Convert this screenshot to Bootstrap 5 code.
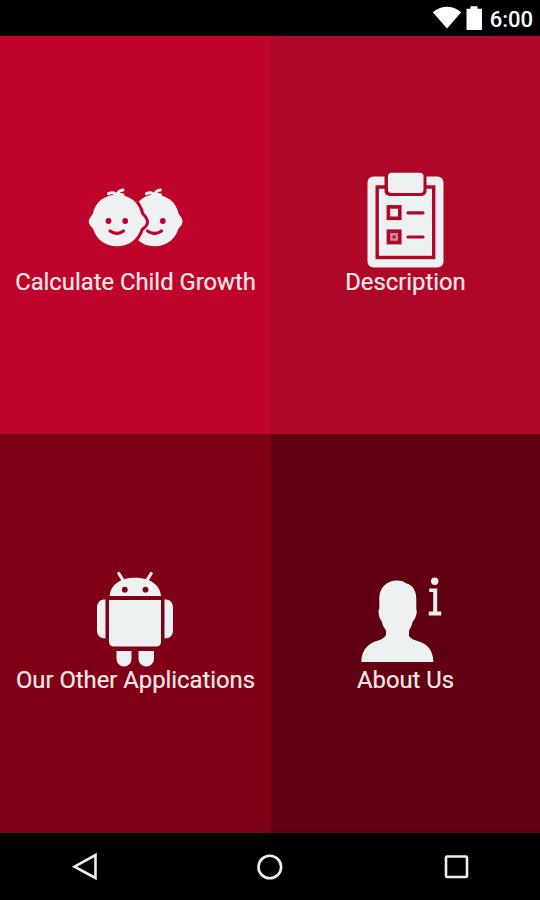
<!DOCTYPE html>
<html lang="en">
<head>
<meta charset="utf-8">
<meta name="viewport" content="width=device-width, initial-scale=1">
<title>Child Growth</title>
<link rel="stylesheet" href="https://cdn.jsdelivr.net/npm/bootstrap@5.3.0/dist/css/bootstrap.min.css">
<style>
body { font-family: Roboto, "Liberation Sans", sans-serif; height: 900px; }
.status-bar { height: 36px; padding-right: 7px; }
.clock { font-size: 22px; line-height: 36px; font-weight: 500; margin: 3px 0 0 6px; }
.menu-grid { display: grid; grid-template-columns: 271px 269px; grid-template-rows: 398px 399px; }
.tile { color: #fbe9e6; padding-top: 134px; }
.tile svg { width: 100px; height: 100px; flex: none; fill: #edf1f1; }
.tile-label { font-size: 23.8px; line-height: 24px; white-space: nowrap; -webkit-text-stroke: .2px; }
.tile-growth { background: #be042a; --tile: #be042a; }
.tile-description { background: #ae0728; --tile: #ae0728; }
.tile-apps { background: #800018; --tile: #800018; }
.tile-about { background: #600012; --tile: #600012; }
.cut { stroke: var(--tile); fill: none; }
.hole { fill: var(--tile); }
.hair { fill: none; stroke: #edf1f1; stroke-width: 3; stroke-linecap: round; }
.nav-keys { height: 67px; padding: 0 69.5px 0 70px; }
.nav-keys svg { width: 30px; height: 30px; fill: none; stroke: #eee; stroke-width: 2.6; }
</style>
</head>
<body class="bg-black d-flex flex-column overflow-hidden">
<header class="status-bar d-flex justify-content-end align-items-center text-white">
  <svg width="52" height="36" viewBox="432 0 52 36" fill="#fff" aria-hidden="true">
    <path d="M432.800 12.200Q447 1.500 461.200 12.200L447 28.500Z"/>
    <path d="M466.500 8.800h4V6.200h7v2.600h4.500V30h-15.500z"/>
  </svg>
  <span class="clock">6:00</span>
</header>
<main class="menu-grid">
  <a href="#" class="tile tile-growth d-flex flex-column align-items-center text-decoration-none">
    <svg viewBox="85.500 170 100 100" aria-hidden="true">
      <path d="M154 194.800C166 194.800 176 202 178.200 214C180 216.500 182 218.500 182 221C182 224 180 226.500 178 228.500C174.500 239.500 166 246.200 154 246.200C147 246.200 142 244 138 240.500V202C142 197.500 147 194.800 154 194.800Z"/>
      <path class="hair" d="M146 193.600Q151.500 191 154 196Q154.500 190.500 159.800 190M154 196Q156.500 193.500 160 195"/>
      <circle class="hole" cx="162.300" cy="221" r="2.900"/>
      <path class="cut" d="M147 231Q154 236 161 231" stroke-width="3.200" stroke-linecap="round"/>
      <path id="baby-front" stroke="#be042a" stroke-width="6" paint-order="stroke" d="M116.500 194.800C128.500 194.800 138.500 202 140.700 214C142.500 216.500 145.500 218.500 145.500 222C145.500 225 143 226.500 140.500 228.500C137 239.500 128.500 246.200 116.500 246.200C104.500 246.200 96 239.500 92.500 228.500C90.500 226.500 88.300 224.500 88.300 221.500C88.300 218.500 90.500 216.500 92.300 214C94.500 202 104.500 194.800 116.500 194.800Z"/>
      <path class="hair" d="M108 193.600Q114 191 116.500 196Q117 190.500 122.500 190M116.500 196Q119 193.500 122.500 195"/>
      <circle class="hole" cx="108" cy="221" r="2.900"/><circle class="hole" cx="124.700" cy="221" r="2.900"/>
      <path class="cut" d="M109.500 231Q116.500 236 123 231" stroke-width="3.200" stroke-linecap="round"/>
    </svg>
    <span class="tile-label">Calculate Child Growth</span>
  </a>
  <a href="#" class="tile tile-description d-flex flex-column align-items-center text-decoration-none">
    <svg viewBox="355.500 170 100 100" aria-hidden="true">
      <rect x="367" y="176.500" width="76" height="91" rx="6"/>
      <rect class="cut" x="376.700" y="187" width="56.500" height="70.500" stroke-width="3.400"/>
      <rect class="hole" x="384" y="170" width="42" height="26" rx="5"/>
      <rect x="387.500" y="172.700" width="35.500" height="20.300" rx="3.500"/>
      <rect class="cut" x="387.900" y="206.900" width="11.400" height="11.400" stroke-width="3.600"/>
      <rect class="cut" x="387.900" y="231.200" width="11.400" height="11.400" stroke-width="3.600"/>
      <rect class="hole" x="389" y="232.300" width="9.200" height="9.200" opacity=".45"/>
      <rect class="hole" x="392.200" y="235.500" width="2.800" height="2.800"/>
      <path class="cut" d="M407.500 212.800h15M407.500 237h15" stroke-width="3.200" stroke-linecap="round"/>
    </svg>
    <span class="tile-label">Description</span>
  </a>
  <a href="#" class="tile tile-apps d-flex flex-column align-items-center text-decoration-none">
    <svg viewBox="86 568 100 100" aria-hidden="true">
      <path d="M109.500 596C110.500 585 120 577.800 135 577.800S160 585 161 596Z"/>
      <path d="M118.800 573.500L123.500 581M151.200 573.500L146.500 581" stroke="#edf1f1" stroke-width="3.200" stroke-linecap="round"/>
      <circle class="hole" cx="124.800" cy="589.700" r="2.900"/><circle class="hole" cx="145.500" cy="589.700" r="2.900"/>
      <path d="M109 600h52v41.500q0 5-5 5h-42q-5 0-5-5z"/>
      <path d="M105.500 599.500V638.500C100 638.500 97 635.500 97 630V608C97 602 100 599.500 105.500 599.500ZM164.500 599.500V638.500C170 638.500 173 635.500 173 630V608C173 602 170 599.500 164.500 599.500Z"/>
      <path d="M116.500 651h15v8a7.500 7.500 0 0 1-15 0zM138.500 651h15.500v8a7.700 7.500 0 0 1-15.500 0z"/>
    </svg>
    <span class="tile-label">Our Other Applications</span>
  </a>
  <a href="#" class="tile tile-about d-flex flex-column align-items-center text-decoration-none">
    <svg viewBox="356 568 100 100" aria-hidden="true">
      <path d="M397 580.500Q403 580.500 406.500 583.500C413 585 416.500 591 416.300 600V609.500Q417.500 611.500 415.800 616Q415 620 413 621Q411.500 627 409 630.500V636Q410.500 639 419 641.500C428 644 433 651 433.500 662H361.300C361.500 652 366 645 375 641.500Q384 639 386 635V630.500Q382.500 626 381.300 620.500Q379 618.500 378.500 612Q378 610 379.300 609V598C379.500 587 387 580.500 397 580.500Z"/>
      <circle cx="434.700" cy="581.300" r="3.700"/>
      <path d="M429.200 588.500h8V611.500h4v4h-12.500v-4h4.500V592h-4z"/>
    </svg>
    <span class="tile-label">About Us</span>
  </a>
</main>
<nav class="nav-keys d-flex justify-content-between align-items-center" aria-label="System">
  <svg viewBox="70 852 30 30" aria-hidden="true"><path d="M95.500 855V878L74.500 866.700Z"/></svg>
  <svg viewBox="255.500 852 30 30" aria-hidden="true"><circle cx="270.300" cy="867" r="11.300"/></svg>
  <svg viewBox="440.500 852 30 30" aria-hidden="true"><rect x="445.500" y="856.500" width="21" height="20.500" rx="1"/></svg>
</nav>
<script src="https://cdn.jsdelivr.net/npm/bootstrap@5.3.0/dist/js/bootstrap.bundle.min.js"></script>
</body>
</html>
